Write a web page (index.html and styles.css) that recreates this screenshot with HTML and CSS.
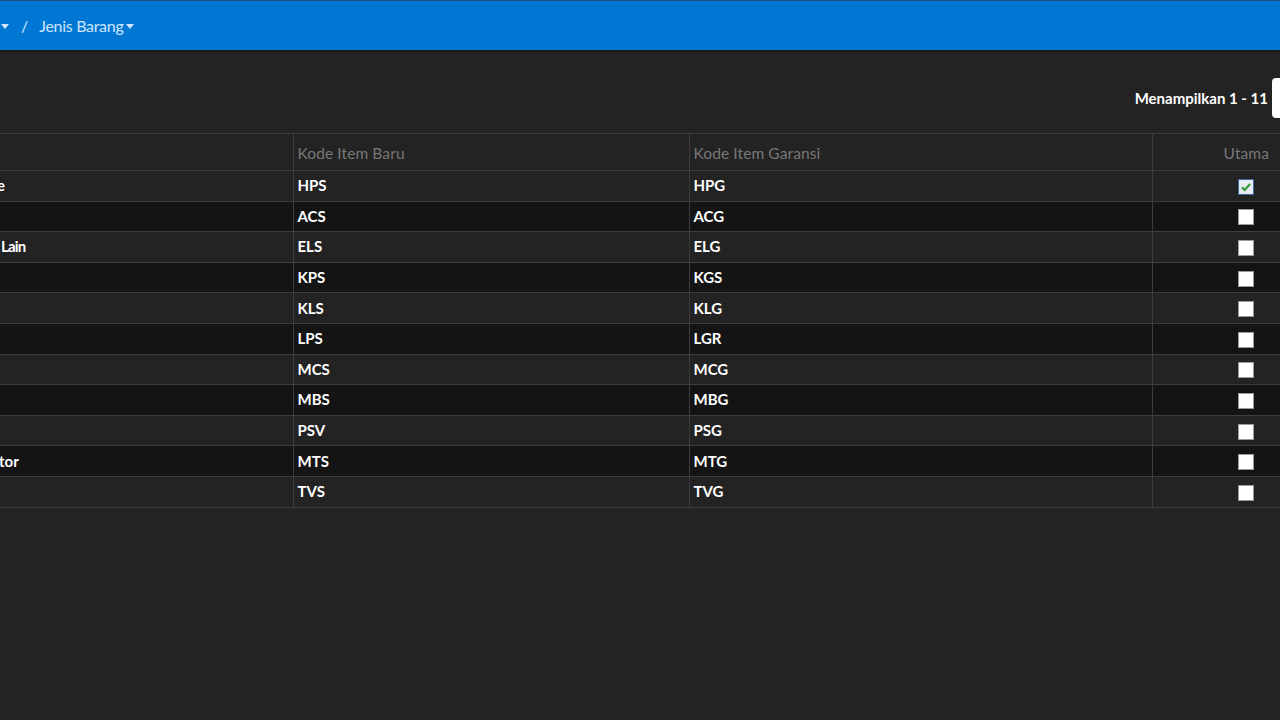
FILE: index.html
```html
<!DOCTYPE html>
<html>
<head>
<meta charset="utf-8">
<link rel="stylesheet" href="styles.css">
</head>
<body>
<header class="topbar">
  <nav class="crumbs">
    <span class="caret"></span>
    <span class="sep">/</span>
    <span class="crumb">Jenis Barang</span>
    <span class="caret"></span>
  </nav>
</header>
<main class="content">
  <div class="toolbar">
    <span class="info">Menampilkan 1 - 11</span>
    <span class="pager"></span>
  </div>
  <table class="grid">
    <colgroup><col class="w1"><col class="w2"><col class="w3"><col></colgroup>
    <thead>
      <tr><th class="c1"></th><th>Kode Item Baru</th><th>Kode Item Garansi</th><th class="c4">Utama</th></tr>
    </thead>
    <tbody>
      <tr><td class="c1"><span class="cut1">e</span></td><td>HPS</td><td>HPG</td><td class="c4"><span class="cb checked"><svg viewBox="0 0 16 16" width="12" height="12"><path d="M2.5 8.5 L6.2 12 L13.5 4" fill="none" stroke="#2e9e3a" stroke-width="2.8"/></svg></span></td></tr>
      <tr><td class="c1"></td><td>ACS</td><td>ACG</td><td class="c4"><span class="cb"></span></td></tr>
      <tr><td class="c1"><span class="cut2">Lain</span></td><td>ELS</td><td>ELG</td><td class="c4"><span class="cb"></span></td></tr>
      <tr><td class="c1"></td><td>KPS</td><td>KGS</td><td class="c4"><span class="cb"></span></td></tr>
      <tr><td class="c1"></td><td>KLS</td><td>KLG</td><td class="c4"><span class="cb"></span></td></tr>
      <tr><td class="c1"></td><td>LPS</td><td>LGR</td><td class="c4"><span class="cb"></span></td></tr>
      <tr><td class="c1"></td><td>MCS</td><td>MCG</td><td class="c4"><span class="cb"></span></td></tr>
      <tr><td class="c1"></td><td>MBS</td><td>MBG</td><td class="c4"><span class="cb"></span></td></tr>
      <tr><td class="c1"></td><td>PSV</td><td>PSG</td><td class="c4"><span class="cb"></span></td></tr>
      <tr><td class="c1"><span class="cut3">tor</span></td><td>MTS</td><td>MTG</td><td class="c4"><span class="cb"></span></td></tr>
      <tr><td class="c1"></td><td>TVS</td><td>TVG</td><td class="c4"><span class="cb"></span></td></tr>
    </tbody>
  </table>
</main>
</body>
</html>
```
FILE: styles.css
```css
html, body {
  margin: 0;
  padding: 0;
  background: #232323;
  width: 1280px;
  height: 720px;
  overflow: hidden;
  font-family: Lato, "Open Sans", sans-serif;
}
.topbar {
  height: 49px;
  background: #0077d3;
  border-top: 1px solid #1a4f80;
  border-bottom: 2px solid #1c1c1c;
  display: flex;
  align-items: center;
}
.crumbs {
  display: flex;
  align-items: center;
  color: #cfe5fb;
  font-size: 16px;
  padding-left: 1px;
}
.caret {
  width: 0;
  height: 0;
  border-left: 4.5px solid transparent;
  border-right: 4.5px solid transparent;
  border-top: 5px solid #cfe5fb;
  margin-top: 2px;
}
.sep {
  margin: 0 12px 0 12px;
}
.crumb {
  margin-left: -1px;
  margin-right: 3px;
  letter-spacing: -0.3px;
}
.content {
  display: flex;
  flex-direction: column;
}
.toolbar {
  height: 79px;
  display: flex;
  justify-content: flex-end;
  align-items: center;
  gap: 4px;
  padding-top: 2px;
}
.info {
  color: #ffffff;
  font-size: 15px;
  font-weight: 700;
  margin-top: 8px;
}
.pager {
  width: 8px;
  height: 40px;
  background: #ffffff;
  border-radius: 4px 0 0 4px;
  margin-top: 8px;
}
.grid {
  border-collapse: collapse;
  width: 1280px;
  table-layout: fixed;
  font-size: 15px;
}
.w1 { width: 293px; }
.w2 { width: 396px; }
.w3 { width: 463px; }
.grid th, .grid td {
  border: 1px solid #3d3d3d;
  padding: 0 4px;
  text-align: left;
  overflow: hidden;
  white-space: nowrap;
}
.grid th {
  height: 35px;
  color: #787878;
  font-weight: 400;
  font-size: 15.5px;
  letter-spacing: 0.1px;
  padding-top: 1px;
}
.grid td {
  height: 28.6px;
  color: #ffffff;
  font-weight: 700;
  padding-top: 0;
  padding-bottom: 1px;
}
.grid tbody tr:nth-child(even) td {
  background: #141414;
}
.grid .c1 { border-left: none; padding-left: 0; }
.grid .c4 { text-align: right; padding-right: 11px; border-right: none; }
.cut1 { display: inline-block; margin-left: -3px; }
.cut2 { margin-left: 1px; letter-spacing: -0.8px; }
.cut3 { margin-left: -1px; }
.cb {
  display: inline-flex;
  align-items: center;
  justify-content: center;
  width: 16px;
  height: 16px;
  background: #ffffff;
  border: 1px solid #9a9a9a;
  box-sizing: border-box;
  vertical-align: middle;
  margin-right: 15px;
}
.cb.checked {
  background: #eaeaf2;
  border: 1.5px solid #3c6ba6;
}
```
